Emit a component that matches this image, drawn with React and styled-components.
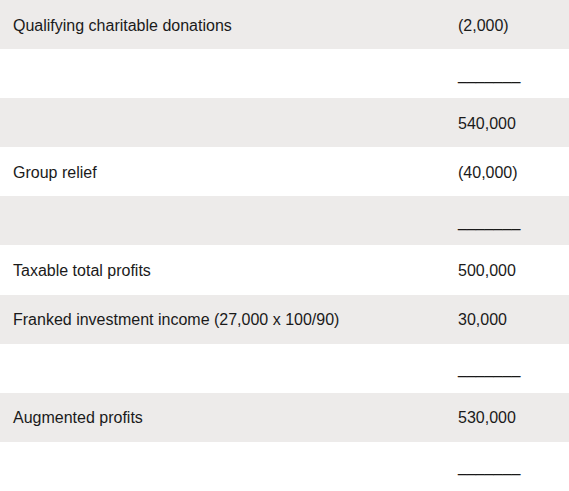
import React from 'react'
import styled, { createGlobalStyle } from 'styled-components'

const GlobalStyle = createGlobalStyle`
  html, body {
    margin: 0;
    padding: 0;
    background: #ffffff;
  }
`

const Table = styled.div`
  display: grid;
  grid-template-rows: repeat(10, 1fr);
  width: 569px;
  height: 491px;
  font-family: Arial, "Liberation Sans", sans-serif;
  font-size: 16px;
  color: #1a1a1a;
`

const Row = styled.div`
  display: grid;
  grid-template-columns: 458px 1fr;
  align-items: center;
  padding-top: 2px;
  background: ${props => (props.shaded ? '#edebea' : '#ffffff')};
`

const Label = styled.div`
  padding-left: 13px;
  white-space: nowrap;
`

const Amount = styled.div`
  white-space: nowrap;
`

const rows = [
  { label: 'Qualifying charitable donations', amount: '(2,000)' },
  { label: '', amount: '_______' },
  { label: '', amount: '540,000' },
  { label: 'Group relief', amount: '(40,000)' },
  { label: '', amount: '_______' },
  { label: 'Taxable total profits', amount: '500,000' },
  { label: 'Franked investment income (27,000 x 100/90)', amount: '30,000' },
  { label: '', amount: '_______' },
  { label: 'Augmented profits', amount: '530,000' },
  { label: '', amount: '_______' },
]

export default function App() {
  return (
    <>
      <GlobalStyle />
      <Table>
        {rows.map((row, i) => (
          <Row key={i} shaded={i % 2 === 0}>
            <Label>{row.label}</Label>
            <Amount>{row.amount}</Amount>
          </Row>
        ))}
      </Table>
    </>
  )
}
